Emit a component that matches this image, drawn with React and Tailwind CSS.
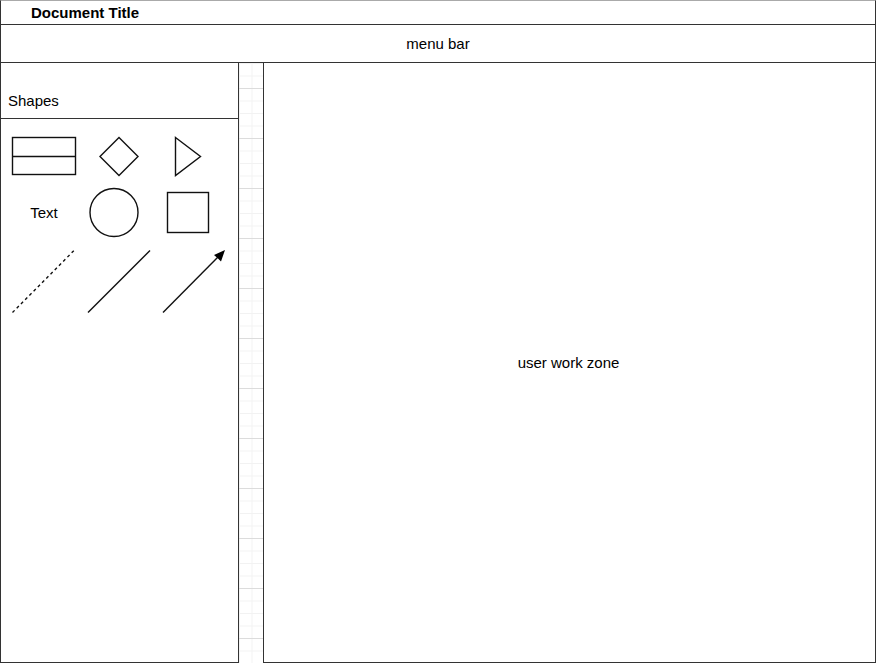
import React from "react";

function ShapeIcons() {
  return (
    <svg width="237" height="200" viewBox="1 0 237 200" className="block">
      <g fill="none" stroke="#111" strokeWidth="1.4">
        {/* row 1 */}
        <rect x="12.5" y="18.5" width="63" height="37" />
        <line x1="12.5" y1="37.5" x2="75.5" y2="37.5" />
        <polygon points="119,18.5 138,37.5 119,56.5 100,37.5" />
        <polygon points="175.5,18.5 200.5,37.5 175.5,56.5" />
        {/* row 2 */}
        <circle cx="114" cy="93.5" r="24" />
        <rect x="167.5" y="73.5" width="41" height="40" />
        {/* row 3 */}
        <line x1="12.5" y1="193.5" x2="74" y2="131.5" strokeDasharray="3 3" />
        <line x1="88" y1="193.5" x2="150" y2="131.5" />
        <line x1="163" y1="193.5" x2="219" y2="137" />
      </g>
      <polygon points="225,131 221,142.5 218,139.5 214,136 " fill="#000" />
      <text x="44" y="98.5" textAnchor="middle" fontSize="15" fontFamily="'Liberation Sans', Arial, sans-serif" fill="#000">
        Text
      </text>
    </svg>
  );
}

export default function App() {
  return (
    <div className="w-[877px] h-[665px] bg-white overflow-hidden font-['Liberation_Sans',Arial,sans-serif] text-black">
      <div className="w-[876px] flex flex-col">
        {/* title */}
        <div className="h-[25px] border-t border-t-[#aaa] border-x border-x-[#333] border-b border-b-[#333] flex items-center pl-[30px]">
          <span className="text-[15px] font-bold leading-none">Document Title</span>
        </div>

        {/* menu bar */}
        <div className="h-[38px] border-x border-b border-[#333] flex items-center justify-center">
          <span className="text-[15px] leading-none">menu bar</span>
        </div>

        {/* body */}
        <div className="flex h-[600px]">
          <div className="w-[239px] border-l border-r border-b border-[#333] flex flex-col">
            <div className="h-[56px] border-b border-[#333] flex items-end pl-[7px] pb-[10px]">
              <span className="text-[15px] leading-none">Shapes</span>
            </div>
            <div className="flex-1">
              <ShapeIcons />
            </div>
          </div>

          <div className="w-[24px] bg-[linear-gradient(#dcdcdc_1px,transparent_1px),linear-gradient(#f2f2f2_1px,transparent_1px),linear-gradient(90deg,#f2f2f2_1px,transparent_1px)] bg-[size:50px_50px,12.5px_12.5px,12.5px_12.5px] bg-[position:0_25px,0_0,0_0]" />

          <div className="flex-1 border-l border-r border-b border-[#333] flex items-center justify-center">
            <span className="text-[15px] leading-none pr-[2px]">user work zone</span>
          </div>
        </div>
      </div>
    </div>
  );
}
